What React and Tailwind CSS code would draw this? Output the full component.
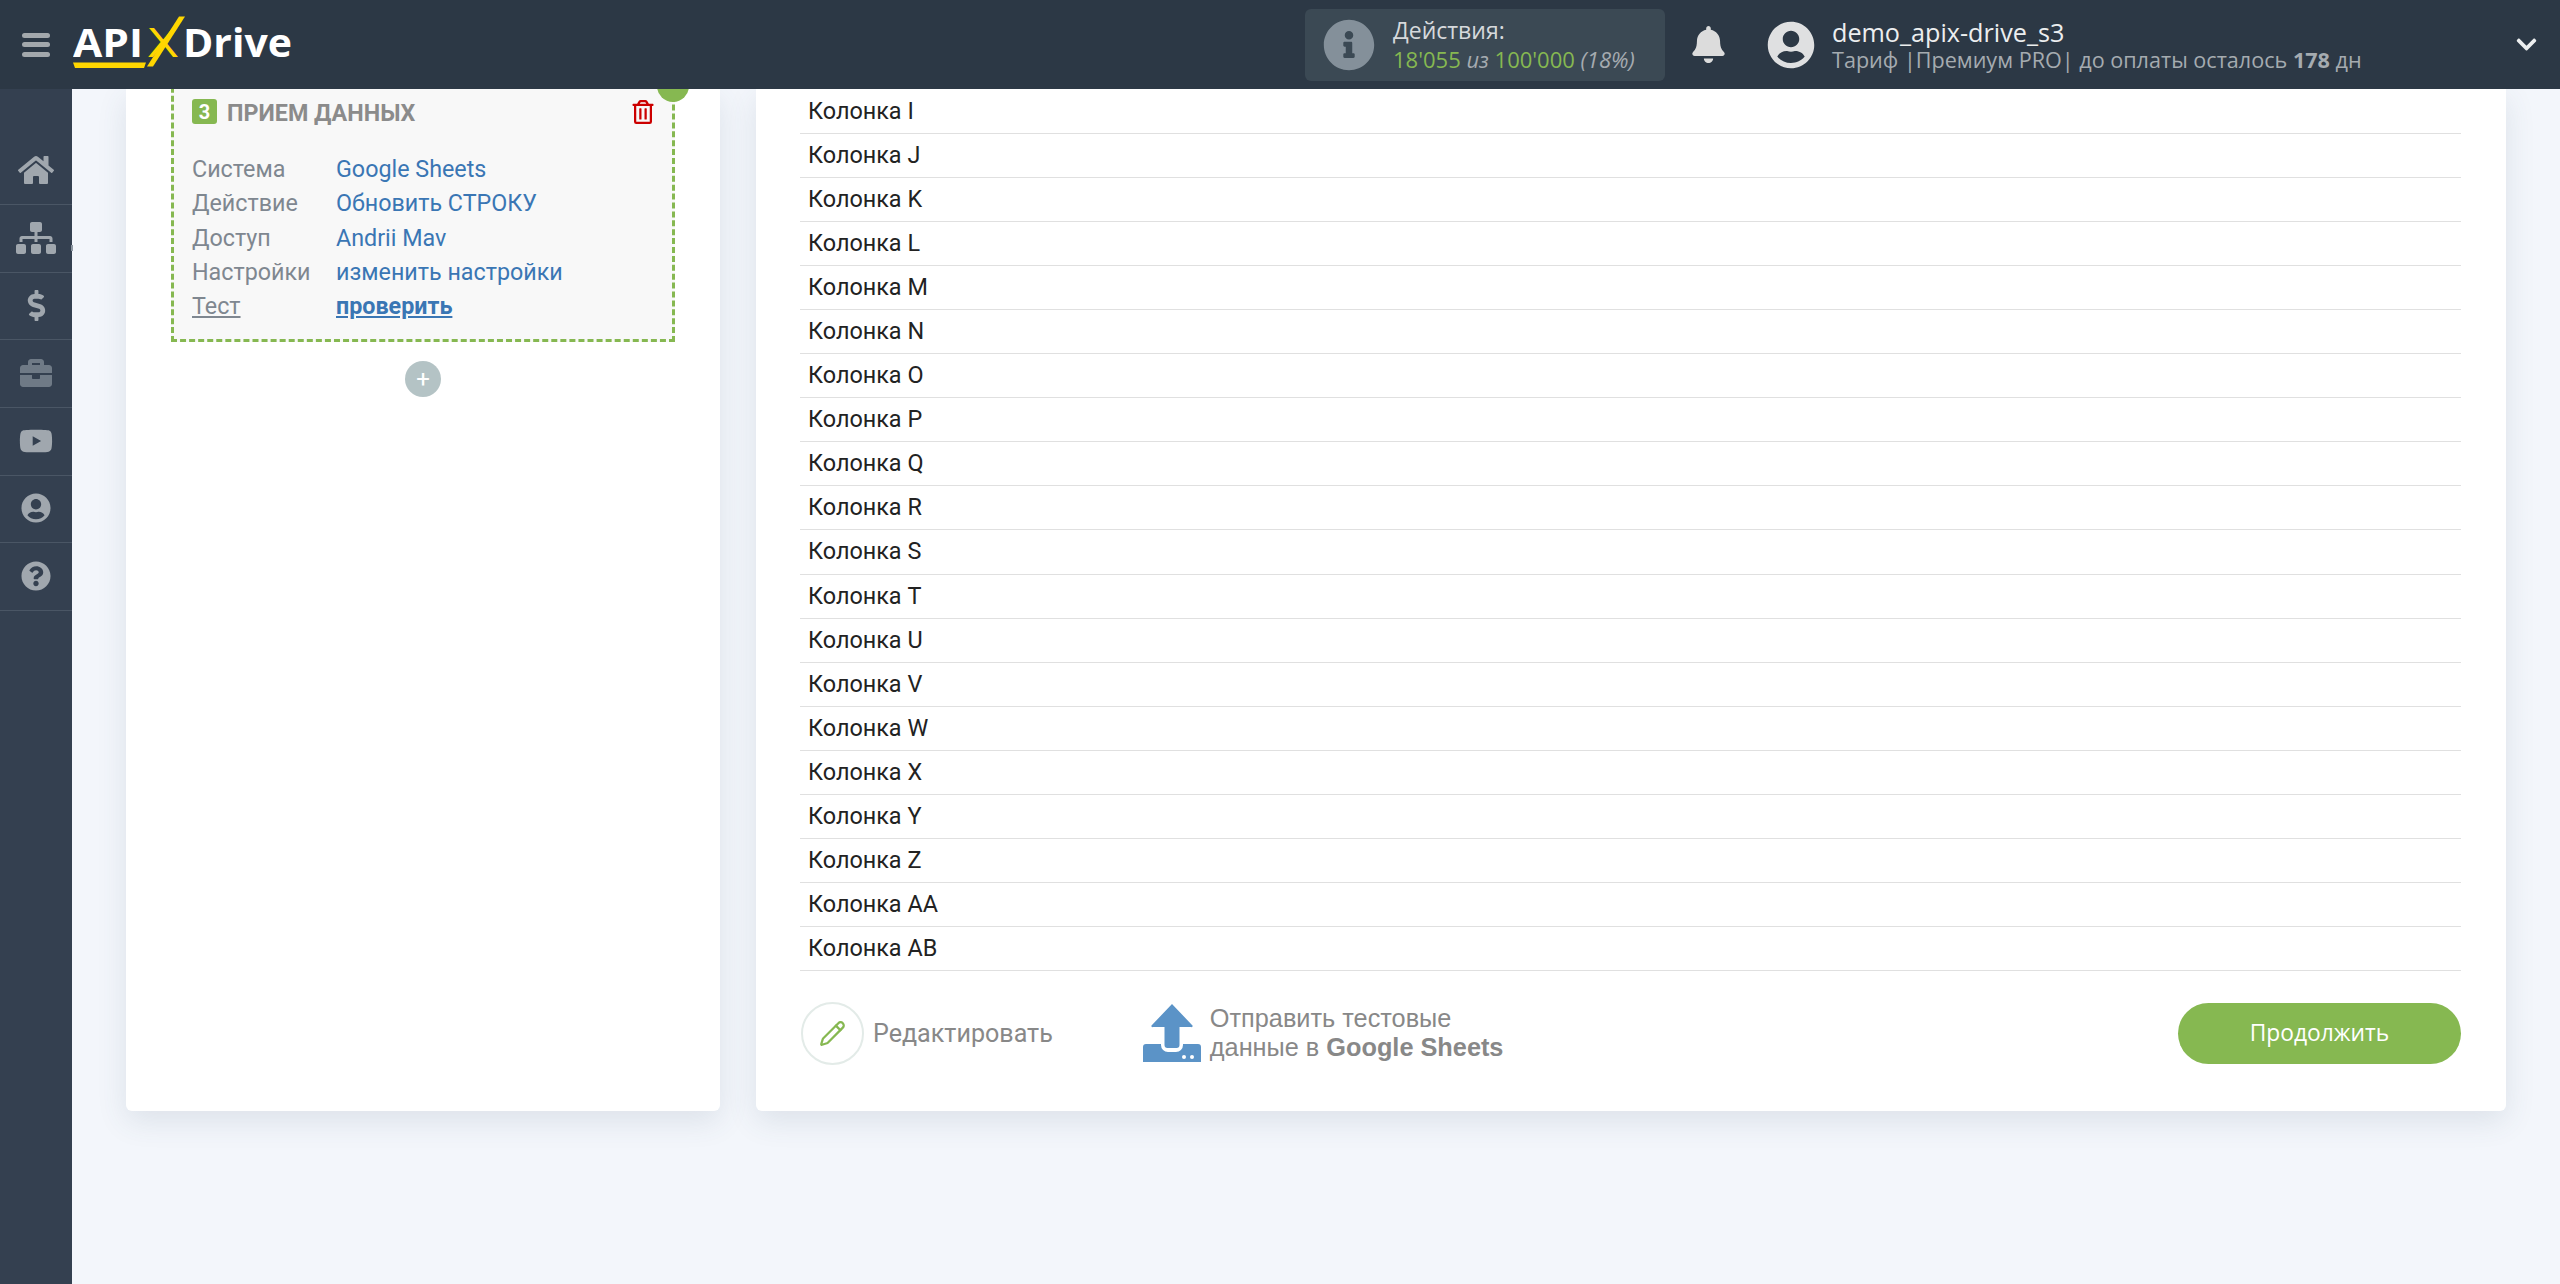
import { Pencil } from 'lucide-react';
import {
  FaBell,
  FaBriefcase,
  FaChevronDown,
  FaDollarSign,
  FaHome,
  FaInfoCircle,
  FaQuestionCircle,
  FaRegTrashAlt,
  FaSitemap,
  FaUserCircle,
  FaYoutube,
} from 'react-icons/fa';

const columns = ['I', 'J', 'K', 'L', 'M', 'N', 'O', 'P', 'Q', 'R', 'S', 'T', 'U', 'V', 'W', 'X', 'Y', 'Z', 'AA', 'AB'];

const Logo = () => (
  <svg width="240" height="60" viewBox="0 0 240 60" className="shrink-0">
    <text x="0" y="41.5" fill="#fff" fontFamily="Open Sans" fontWeight="700" fontSize="39" textLength="70" lengthAdjust="spacingAndGlyphs">API</text>
    <text x="75" y="41.5" fill="#ffd600" fontFamily="Open Sans" fontWeight="400" fontSize="40" textLength="30" lengthAdjust="spacingAndGlyphs">X</text>
    <polygon points="74,51.5 80,51.5 112,1.5 106,1.5" fill="#ffd600" />
    <polygon points="0,47.5 73,47.5 71,53 2,53" fill="#ffd600" />
    <text x="110" y="41.5" fill="#fff" fontFamily="Open Sans" fontWeight="700" fontSize="39" textLength="109" lengthAdjust="spacingAndGlyphs">Drive</text>
  </svg>
);

const Header = () => (
  <header className="h-[89px] bg-[#2c3845] flex items-center shrink-0 relative z-10">
    <div className="w-[73px] pl-[22px] flex flex-col gap-[4.5px] shrink-0">
      <span className="block w-[28px] h-[5px] rounded-sm bg-[#a3a8ac]"></span>
      <span className="block w-[28px] h-[5px] rounded-sm bg-[#a3a8ac]"></span>
      <span className="block w-[28px] h-[5px] rounded-sm bg-[#a3a8ac]"></span>
    </div>
    <Logo />

    <div className="ml-[992px] w-[360px] h-[72px] rounded-md bg-[#3b4954] flex items-center pl-[18px] shrink-0">
      <FaInfoCircle size={52} className="text-[#84909a] shrink-0" />
      <div className="ml-[18px] font-['Open_Sans',sans-serif] leading-[29px]">
        <div className="text-[#d6d9dc] text-[23px]">Действия:</div>
        <div className="text-[#a5abb0] text-[22px] whitespace-nowrap">
          <span className="text-[#86b851]">18'055</span> <i>из</i>{' '}
          <span className="text-[#86b851]">100'000</span> <i>(18%)</i>
        </div>
      </div>
    </div>

    <FaBell size={37} className="ml-[25px] text-[#dcdcdc] shrink-0" />

    <FaUserCircle size={48} className="ml-[40px] text-[#dfe0e1] shrink-0" />
    <div className="ml-[17px] font-['Open_Sans',sans-serif]">
      <div className="text-[25.2px] leading-[30px] text-[#eceeef]">demo_apix-drive_s3</div>
      <div className="text-[21.6px] leading-[25px] text-[#a5abb0] whitespace-nowrap">
        Тариф |Премиум PRO| до оплаты осталось <b>178</b> дн
      </div>
    </div>
    <FaChevronDown size={23} className="ml-auto mr-[22px] text-[#eceeef] shrink-0" />
  </header>
);

const navItems = [
  { icon: <FaHome size={36} />, color: 'text-[#a0a7ae]', height: 'h-[116px] pt-[47px]' },
  { icon: <FaSitemap size={40} />, color: 'text-[#a0a7ae]', height: 'h-[68px] pb-[2px]' },
  { icon: <FaDollarSign size={31} />, color: 'text-[#a0a7ae]', height: 'h-[67px] pb-[2px]' },
  { icon: <FaBriefcase size={32} />, color: 'text-[#6f7a86]', height: 'h-[68px] pb-[2px]' },
  { icon: <FaYoutube size={34} />, color: 'text-[#a0a7ae]', height: 'h-[68px] pb-[2px]' },
  { icon: <FaUserCircle size={30} />, color: 'text-[#a0a7ae]', height: 'h-[67px] pb-[2px]' },
  { icon: <FaQuestionCircle size={30} />, color: 'text-[#a0a7ae]', height: 'h-[68px] pb-[2px]' },
];

const Sidebar = () => (
  <aside className="w-[72px] shrink-0 bg-[#344050] relative">
    {navItems.map((item, i) => (
      <div
        key={i}
        className={`${item.height} ${item.color} flex items-center justify-center border-b border-[#4a5665]`}
      >
        {item.icon}
      </div>
    ))}
    <span className="absolute left-[71px] top-[156px] w-[2px] h-[6px] bg-[#8c96a1]"></span>
  </aside>
);

const details = [
  { label: 'Система', value: 'Google Sheets' },
  { label: 'Действие', value: 'Обновить СТРОКУ' },
  { label: 'Доступ', value: 'Andrii Mav' },
  { label: 'Настройки', value: 'изменить настройки' },
];

const StepCard = () => (
  <div className="w-[594px] h-[1022px] shrink-0 bg-white rounded-b-md shadow-[0_10px_30px_rgba(60,80,110,0.12)] px-[45px] font-[Roboto,sans-serif]">
    <div className="relative -mt-[20px] h-[273px] border-[3px] border-dashed border-[#86b851] bg-[#f8f8f8] pl-[18px] pr-[17px]">
      <span className="absolute -right-[17px] -top-[2px] w-[32px] h-[32px] rounded-full bg-[#86b851]"></span>
      <div className="flex items-center h-[25px] mt-[27px]">
        <span className="w-[25px] h-[25px] rounded-[3px] bg-[#86b851] text-white text-[20px] font-bold flex items-center justify-center">3</span>
        <span className="ml-[10px] text-[23.3px] font-bold text-[#8b8b8b] relative top-[2px]">ПРИЕМ ДАННЫХ</span>
        <FaRegTrashAlt size={24} className="ml-auto text-[#cc0000]" />
      </div>
      <div className="mt-[28px] text-[23.3px] leading-[34.3px]">
        {details.map((row) => (
          <div key={row.label} className="flex">
            <span className="w-[144px] text-[#7f8790]">{row.label}</span>
            <span className="text-[#3a76b4]">{row.value}</span>
          </div>
        ))}
        <div className="flex">
          <span className="w-[144px] text-[#7f8790] underline">Тест</span>
          <span className="text-[#3a76b4] font-bold underline">проверить</span>
        </div>
      </div>
    </div>
    <div className="mt-[19px] mx-auto w-[36px] h-[36px] rounded-full bg-[#b4c3c5] text-white text-[24px] leading-[36px] text-center">+</div>
  </div>
);

const UploadIcon = () => (
  <svg width="58" height="58" viewBox="0 0 58 58" className="shrink-0">
    <path d="M0 43a3 3 0 0 1 3-3h15v1a7 7 0 0 0 7 7h8a7 7 0 0 0 7-7v-1h15a3 3 0 0 1 3 3v15H0z" fill="#5b93c7" />
    <path d="M29 0l20 21a1 1 0 0 1-1 2H36.5v18a3 3 0 0 1-3 3h-9a3 3 0 0 1-3-3V23H10a1 1 0 0 1-1-2z" fill="#5b93c7" />
    <circle cx="41" cy="53" r="2" fill="#fff" />
    <circle cx="49" cy="53" r="2" fill="#fff" />
  </svg>
);

const ColumnsCard = () => (
  <div className="w-[1750px] h-[1022px] shrink-0 bg-white rounded-b-md shadow-[0_10px_30px_rgba(60,80,110,0.12)] pl-[44px] pr-[45px] font-[Roboto,sans-serif]">
    <div className="pt-px">
      {columns.map((name) => (
        <div key={name} className="h-[44.05px] border-b border-[#e0e0e0] pl-[8px] text-[23.4px] leading-[42px] text-[#222]">
          Колонка {name}
        </div>
      ))}
    </div>
    <div className="flex items-center mt-[31px]">
      <div className="ml-px w-[63px] h-[63px] rounded-full border-2 border-[#e3ebe8] flex items-center justify-center shrink-0">
        <Pencil size={27} strokeWidth={2} className="text-[#86b851]" />
      </div>
      <span className="ml-[9px] text-[25.1px] text-[#888]">Редактировать</span>
      <div className="ml-[90px] flex items-center">
        <UploadIcon />
        <div className="ml-[9px] font-['Liberation_Sans',Arial,sans-serif] text-[25.3px] leading-[29px] text-[#888]">
          Отправить тестовые
          <br />
          данные в <b>Google Sheets</b>
        </div>
      </div>
      <button className="ml-auto w-[283px] h-[61px] rounded-full bg-[#86b851] text-white text-[22.8px] font-['Open_Sans',sans-serif]">
        Продолжить
      </button>
    </div>
  </div>
);

const App = () => (
  <div className="h-[1284px] w-[2560px] flex flex-col overflow-hidden bg-[#f3f6fb]">
    <Header />
    <div className="flex flex-1 min-h-0">
      <Sidebar />
      <main className="flex-1 overflow-hidden">
        <div className="flex gap-[36px] pl-[54px]">
          <StepCard />
          <ColumnsCard />
        </div>
      </main>
    </div>
  </div>
);

export default App;
